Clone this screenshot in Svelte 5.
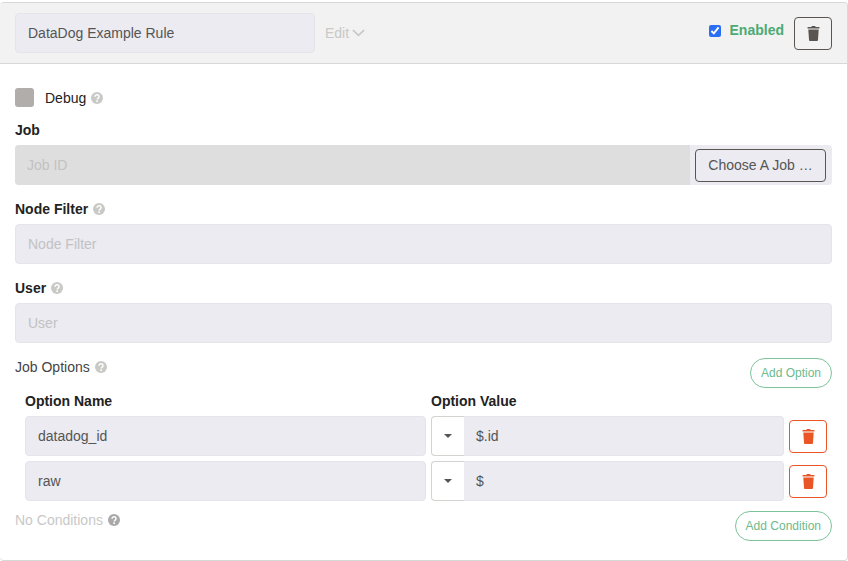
<script>
  let options = [
    { name: 'datadog_id', value: '$.id' },
    { name: 'raw', value: '$' }
  ];
</script>

{#snippet help()}
  <svg class="help" viewBox="0 0 16 16" width="12" height="12">
    <circle cx="8" cy="8" r="8" fill="currentColor" />
    <path d="M5.3 6.2a2.7 2.5 0 1 1 4.3 2c-.9.6-1.3 1-1.3 1.9" fill="none" stroke="#fff" stroke-width="1.9" />
    <rect x="7.1" y="11.2" width="2.2" height="2.1" fill="#fff" />
  </svg>
{/snippet}

{#snippet trash()}
  <svg viewBox="0 0 14 16" width="13" height="15">
    <path fill="currentColor" d="M5.2 0h3.6l.5 1h4.1v1.6H.6V1h4.100zM1.400 3.700h11.200l-.8 11.500a.9.9 0 0 1-.9.800H3.100a.9.9 0 0 1-.9-.800z" />
  </svg>
{/snippet}

<div class="panel">
  <header>
    <input class="field title" value="DataDog Example Rule" readonly />
    <span class="edit">
      Edit
      <svg viewBox="0 0 14 8" width="13" height="8"><path d="M1 1l6 5.500L13 1" fill="none" stroke="currentColor" stroke-width="1.800" /></svg>
    </span>
    <label class="enabled">
      <input type="checkbox" checked />
      <span>Enabled</span>
    </label>
    <button class="icon-btn dark">{@render trash()}</button>
  </header>

  <section class="body">
    <div class="debug">
      <span class="box"></span>
      <span>Debug</span>
      {@render help()}
    </div>

    <div class="label first"><b>Job</b></div>
    <div class="job">
      <input class="field job-id" placeholder="Job ID" readonly />
      <div class="job-btn"><button>Choose A Job …</button></div>
    </div>

    <div class="label"><b>Node Filter</b> {@render help()}</div>
    <input class="field" placeholder="Node Filter" readonly />

    <div class="label"><b>User</b> {@render help()}</div>
    <input class="field" placeholder="User" readonly />

    <div class="row-head">
      <span class="plain">Job Options {@render help()}</span>
      <button class="pill">Add Option</button>
    </div>

    <div class="options">
      <b>Option Name</b>
      <b>Option Value</b>
      <span></span>
      {#each options as opt}
        <input class="field" value={opt.name} readonly />
        <div class="value">
          <span class="caret"><i></i></span>
          <input class="field" value={opt.value} readonly />
        </div>
        <button class="icon-btn danger">{@render trash()}</button>
      {/each}
    </div>

    <div class="row-head cond">
      <span class="plain muted">No Conditions {@render help()}</span>
      <button class="pill">Add Condition</button>
    </div>
  </section>
</div>

<style>
  :global(body) {
    margin: 0;
    background: #fff;
    font-family: "Liberation Sans", Arial, sans-serif;
    font-size: 14px;
    color: #222;
  }
  .panel {
    box-sizing: border-box;
    margin-top: 2px;
    height: 559px;
    border: 1px solid #d8d8d8;
    border-left: 0;
    border-radius: 4px;
    overflow: hidden;
  }
  header {
    box-sizing: border-box;
    height: 61px;
    display: flex;
    align-items: center;
    padding: 0 15px;
    background: #f2f2f2;
    border-bottom: 1px solid #d8d8d8;
  }
  .field {
    box-sizing: border-box;
    display: block;
    width: 100%;
    height: 40px;
    padding: 0 12px;
    border: 1px solid #e4e4ea;
    border-radius: 4px;
    background: #ebebf1;
    color: #555;
    font: inherit;
    outline: none;
  }
  .field::placeholder {
    color: #c2c2c2;
    opacity: 1;
  }
  .title {
    width: 300px;
  }
  .edit {
    margin-left: 10px;
    color: #c8c8c8;
    display: flex;
    align-items: center;
    gap: 3px;
  }
  .enabled {
    margin-left: auto;
    margin-bottom: 4px;
    display: flex;
    align-items: center;
    color: #4caa72;
    font-weight: bold;
  }
  .enabled input {
    width: 12px;
    height: 12px;
    margin: 0 9px 0 0;
    accent-color: #2a6ef5;
  }
  .enabled span {
    margin-bottom: 2px;
  }
  .icon-btn {
    box-sizing: border-box;
    width: 38px;
    height: 33px;
    padding: 0;
    display: flex;
    align-items: center;
    justify-content: center;
    background: transparent;
    border-radius: 4px;
  }
  .dark {
    margin-left: 10px;
    border: 1px solid #5a5550;
    color: #5a5550;
  }
  .danger {
    border: 1px solid #ea5527;
    color: #ea5527;
  }
  .body {
    padding: 24px 15px 0;
  }
  .debug {
    display: flex;
    align-items: center;
    height: 19px;
  }
  .box {
    width: 19px;
    height: 19px;
    margin-right: 11px;
    border-radius: 3px;
    background: #b0adaa;
  }
  .help {
    margin-left: 1px;
    color: #c9c9c5;
    vertical-align: -1px;
  }
  .debug .help {
    margin-left: 5px;
  }
  .label {
    height: 20px;
    line-height: 20px;
    margin: 14px 0 5px;
  }
  .label.first {
    margin-top: 13px;
  }
  .job {
    display: flex;
    height: 40px;
    border-radius: 4px;
    overflow: hidden;
    background: #ebebf1;
  }
  .job-id {
    flex: 1;
    background: #dedede;
    border: 0;
    border-radius: 0;
  }
  .job-btn {
    width: 142px;
    display: flex;
    align-items: center;
  }
  .job-btn button {
    box-sizing: border-box;
    width: 131px;
    height: 33px;
    margin-left: 5px;
    padding: 0;
    background: #ebebf1;
    border: 1px solid #5a5550;
    border-radius: 4px;
    color: #555;
    font: inherit;
  }
  .row-head {
    display: flex;
    justify-content: space-between;
    align-items: flex-start;
    margin-top: 14px;
  }
  .plain {
    line-height: 20px;
    color: #444;
  }
  .muted {
    color: #c8c8c8;
  }
  .muted .help {
    color: #a9a9a9;
  }
  .pill {
    box-sizing: border-box;
    height: 30px;
    margin-top: 1px;
    padding: 0 10px;
    background: #fff;
    border: 1px solid #7cc29a;
    border-radius: 15px;
    color: #6cba8e;
    font: 12px "Liberation Sans", Arial, sans-serif;
  }
  .options {
    display: grid;
    grid-template-columns: 401px 353px 38px;
    column-gap: 5px;
    row-gap: 5px;
    margin: 3px 0 0 10px;
    align-items: center;
  }
  .options b {
    line-height: 20px;
  }
  .value {
    display: flex;
  }
  .caret {
    box-sizing: border-box;
    flex: 0 0 33px;
    height: 40px;
    display: flex;
    align-items: center;
    justify-content: center;
    border: 1px solid #d5d3cf;
    border-right: 0;
    border-radius: 4px 0 0 4px;
  }
  .caret i {
    border-top: 4px solid #555;
    border-left: 4px solid transparent;
    border-right: 4px solid transparent;
  }
  .value .field {
    flex: 1;
    min-width: 0;
    border-left: 0;
    border-radius: 0 4px 4px 0;
  }
  .cond {
    margin-top: 9px;
  }
</style>
